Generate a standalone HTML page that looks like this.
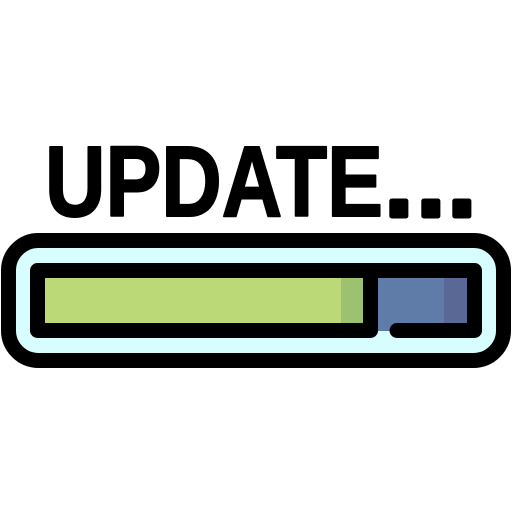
<!DOCTYPE html>
<html><head><style>html,body{margin:0;padding:0;background:#fff;width:512px;height:512px;overflow:hidden}</style></head>
<body>
<svg width="512" height="512" viewBox="0 0 512 512" xmlns="http://www.w3.org/2000/svg">
<g font-family="Liberation Sans, sans-serif" font-weight="bold" font-size="100" fill="#000" stroke="#000" stroke-linejoin="round">
<text x="45" y="216" textLength="338" lengthAdjust="spacingAndGlyphs" stroke-width="2">UPDATE</text>
<text x="385" y="216" stroke-width="5">.</text>
<text x="417" y="216" stroke-width="5">.</text>
<text x="448" y="216" stroke-width="5">.</text>
</g>
<rect x="8.5" y="240.5" width="495" height="120" rx="30" fill="#d8fdff" stroke="#000" stroke-width="15"/>
<rect x="45" y="278" width="318" height="45" fill="#bcd977"/>
<rect x="341" y="278" width="22" height="45" fill="#9dc26f"/>
<rect x="378" y="278" width="89" height="53" fill="#5f7ca9"/>
<rect x="444" y="278" width="23" height="45" fill="#5a6895"/>
<path d="M397 330.5 H474.5 V270.5 H37.5 V330.5 H370.5 V270.5" fill="none" stroke="#000" stroke-width="15" stroke-linecap="round" stroke-linejoin="round"/>
</svg>
</body></html>
